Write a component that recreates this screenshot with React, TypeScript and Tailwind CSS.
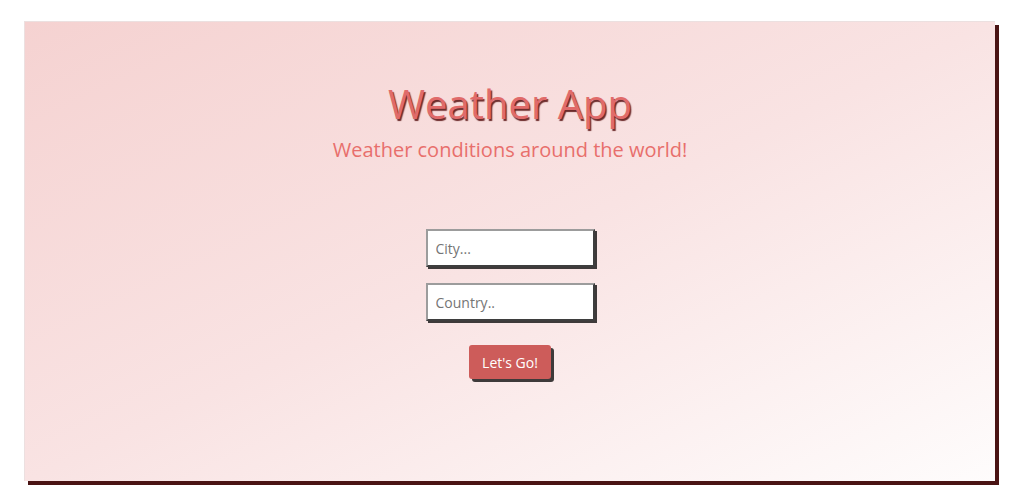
import React from "react";

const App: React.FC = () => {
  return (
    <div className="w-[1012px] h-[502px] bg-white pt-[21px] pl-[24px] font-['Open_Sans',sans-serif]">
      <div className="w-[971px] h-[460px] bg-gradient-to-br from-[#f5d2d1] via-[#f9e3e3] to-[#fefcfc] border-l border-t border-[#ece0e0] shadow-[4px_4px_0_#4a1414] flex flex-col items-center">
        <h1 className="mt-[55px] text-[40px] leading-[54px] text-[#e06b6a] [text-shadow:1.5px_1.5px_1px_#6b2a2a]">
          Weather App
        </h1>
        <p className="mt-[5px] text-[20px] leading-[28px] text-[#e86f6c]">
          Weather conditions around the world!
        </p>
        <form
          className="mt-[65px] flex flex-col items-center"
          onSubmit={(e) => e.preventDefault()}
        >
          <input
            type="text"
            placeholder="City..."
            className="w-[169px] h-[38px] bg-white px-2 text-[14px] text-gray-700 placeholder:text-[#757575] border-2 border-t-[#9c9c9c] border-l-[#9c9c9c] border-r-[#3e3e3e] border-b-[#3e3e3e] shadow-[2px_2px_0_#3e3a3a] outline-none"
          />
          <input
            type="text"
            placeholder="Country.."
            className="mt-[16px] w-[169px] h-[38px] bg-white px-2 text-[14px] text-gray-700 placeholder:text-[#757575] border-2 border-t-[#9c9c9c] border-l-[#9c9c9c] border-r-[#3e3e3e] border-b-[#3e3e3e] shadow-[2px_2px_0_#3e3a3a] outline-none"
          />
          <button
            type="submit"
            className="mt-[24px] w-[82px] h-[34px] bg-[#cd5c5a] text-white text-[14px] rounded-[3px] shadow-[3px_3px_0_#3e3a3a]"
          >
            Let's Go!
          </button>
        </form>
      </div>
    </div>
  );
};

export default App;
